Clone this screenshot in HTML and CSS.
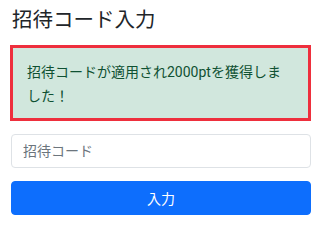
FILE: index.html
```html
<!DOCTYPE html>
<html lang="ja">
<head>
<meta charset="utf-8">
<link rel="stylesheet" href="styles.css">
</head>
<body>
<div class="page">
  <h1 class="title">招待コード入力</h1>
  <div class="alert">招待コードが適用され2000ptを獲得しました！</div>
  <input class="field" type="text" placeholder="招待コード">
  <button class="btn" type="button">入力</button>
</div>
</body>
</html>
```
FILE: styles.css
```css
* { box-sizing: border-box; }
html, body { margin: 0; padding: 0; background: #fff; }
body {
  font-family: Roboto, "Noto Sans CJK JP", sans-serif;
  color: #212529;
}
.page {
  width: 320px;
  padding: 8px 9px 0 11px;
  display: flex;
  flex-direction: column;
}
.title {
  margin: 0 0 13px 1px;
  font-size: 20.5px;
  font-weight: 400;
  line-height: 24px;
}
.alert {
  margin-left: -1px;
  border: 3px solid #ee2f3d;
  background: #d1e7dd;
  color: #0f5132;
  font-size: 14px;
  line-height: 24px;
  padding: 12px 20px 10px 14px;
}
.field {
  margin-top: 13px;
  height: 34px;
  width: 100%;
  border: 1px solid #dee2e6;
  border-radius: 4px;
  padding: 0 11px;
  font-family: inherit;
  font-size: 14px;
  color: #212529;
  background: #fff;
  outline: none;
}
.field::placeholder { color: #6c757d; }
.btn {
  margin-top: 13px;
  height: 34px;
  width: 100%;
  border: 1px solid #0d6efd;
  border-radius: 4px;
  background: #0d6efd;
  color: #fff;
  font-family: inherit;
  font-size: 14px;
  padding: 0;
}
```
